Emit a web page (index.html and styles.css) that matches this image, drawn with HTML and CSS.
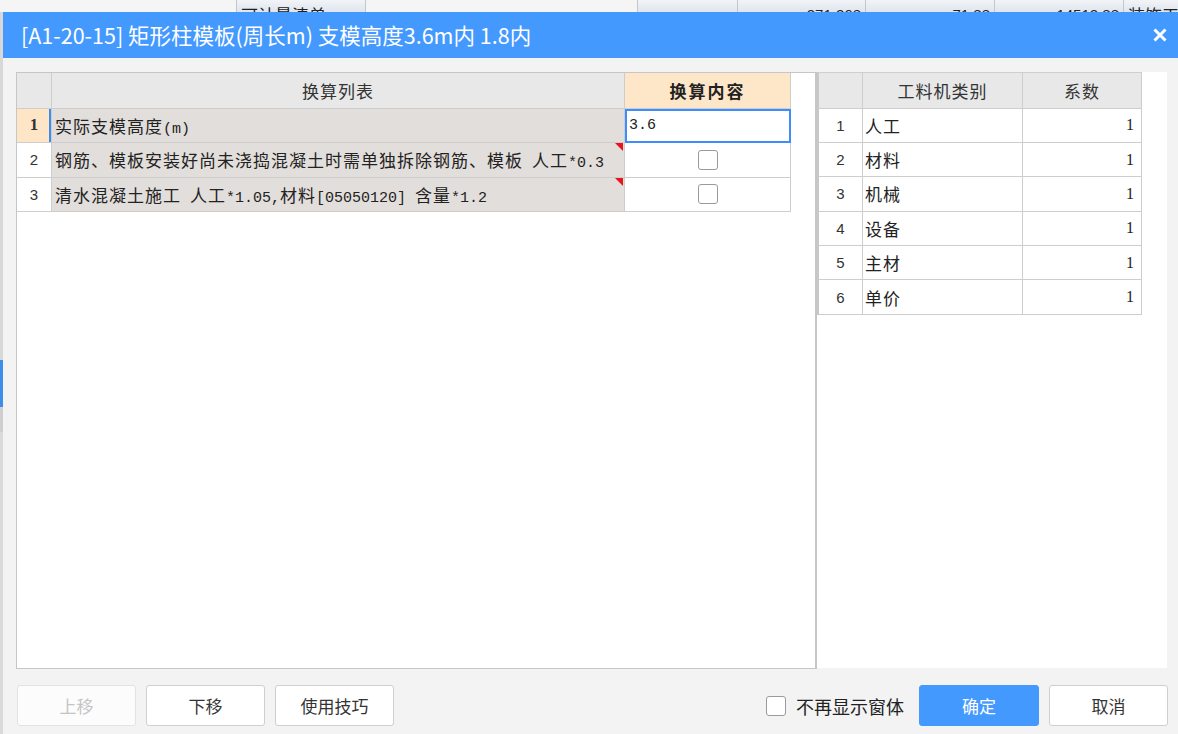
FILE: index.html
```html
<!DOCTYPE html>
<html lang="zh-CN">
<head>
<meta charset="utf-8">
<title>换算</title>
<link rel="stylesheet" href="styles.css">
</head>
<body>
<div class="bgwin">
  <div class="bgcell c1"></div>
  <div class="bgcell c2">可计量清单</div>
  <div class="bgcell c3"></div>
  <div class="bgcell c4"></div>
  <div class="bgcell c5 num">371.368</div>
  <div class="bgcell c6 num">71.88</div>
  <div class="bgcell c7 num">14512.88</div>
  <div class="bgcell c8">装饰工</div>
</div>
<div class="stage">
  <div class="leftstrip"></div>
  <div class="dialog">
    <div class="titlebar">
      <span class="title">[A1-20-15] 矩形柱模板(周长m) 支模高度3.6m内 1.8内</span>
      <svg class="close" width="14" height="14" viewBox="0 0 14 14"><path d="M1.5 1.5 L12.5 12.5 M12.5 1.5 L1.5 12.5" stroke="#fff" stroke-width="3" stroke-linecap="butt"/></svg>
    </div>
    <div class="body">
      <div class="main">
        <div class="lpanel">
          <div class="lgrid">
            <div class="cell head"></div>
            <div class="cell head">换算列表</div>
            <div class="cell head headhi">换算内容</div>

            <div class="cell rn rnsel">1</div>
            <div class="cell desc"><span class="txt">实际支模高度<span class="lat">(m)</span></span></div>
            <div class="cell val valsel"><span class="lat">3.6</span></div>

            <div class="cell rn">2</div>
            <div class="cell desc"><span class="txt">钢筋、模板安装好尚未浇捣混凝土时需单独拆除钢筋、模板<span class="lat"> </span>人工<span class="lat">*0.3</span></span><i class="flag"></i></div>
            <div class="cell chk"><span class="cb"></span></div>

            <div class="cell rn">3</div>
            <div class="cell desc"><span class="txt">清水混凝土施工<span class="lat"> </span>人工<span class="lat">*1.05,</span>材料<span class="lat">[05050120] </span>含量<span class="lat">*1.2</span></span><i class="flag"></i></div>
            <div class="cell chk"><span class="cb"></span></div>
          </div>
        </div>
        <div class="rpanel">
          <div class="rgrid">
            <div class="cell head"></div>
            <div class="cell head">工料机类别</div>
            <div class="cell head">系数</div>

            <div class="cell rn">1</div><div class="cell name">人工</div><div class="cell coef">1</div>
            <div class="cell rn">2</div><div class="cell name">材料</div><div class="cell coef">1</div>
            <div class="cell rn">3</div><div class="cell name">机械</div><div class="cell coef">1</div>
            <div class="cell rn">4</div><div class="cell name">设备</div><div class="cell coef">1</div>
            <div class="cell rn">5</div><div class="cell name">主材</div><div class="cell coef">1</div>
            <div class="cell rn">6</div><div class="cell name">单价</div><div class="cell coef">1</div>
          </div>
        </div>
      </div>
      <div class="footer">
        <div class="btngroup">
          <button class="btn disabled">上移</button>
          <button class="btn">下移</button>
          <button class="btn">使用技巧</button>
        </div>
        <div class="actions">
          <label class="dontshow"><span class="cb"></span><span>不再显示窗体</span></label>
          <button class="btn primary">确定</button>
          <button class="btn">取消</button>
        </div>
      </div>
    </div>
  </div>
</div>
</body>
</html>
```

FILE: styles.css
```css
* { box-sizing: border-box; }

html, body {
  margin: 0;
  padding: 0;
}

body {
  width: 1178px;
  height: 734px;
  overflow: hidden;
  background: #e6e6e6;
  font-family: "Noto Sans CJK SC", "Noto Sans", sans-serif;
  color: #222;
}

/* window behind the dialog */
.bgwin {
  display: flex;
  height: 12px;
  overflow: hidden;
  background: #eef0f3;
}
.bgcell {
  height: 12px;
  overflow: hidden;
  border-right: 1px solid #c3c7cc;
  padding: 5px 4px 0;
  font-size: 17px;
  line-height: 20px;
  color: #222;
  white-space: nowrap;
  background: linear-gradient(#f2f4f7, #dfe5ee);
}
.bgcell.num { text-align: right; font-family: "Liberation Sans", sans-serif; font-size: 15px; }
.c1 { width: 237px; background: #f5f5f5; }
.c2 { width: 129px; }
.c3 { width: 272px; background: #f5f5f5; }
.c4 { width: 100px; }
.c5 { width: 128px; }
.c6 { width: 129px; }
.c7 { width: 129px; }
.c8 { width: 54px; border-right: none; }

.stage {
  display: flex;
  height: 722px;
}
.leftstrip {
  width: 3px;
  flex: none;
  background: linear-gradient(to bottom, #d8d8d8 0 348px, #3d8ee8 348px 395px, #cfcfcf 395px 420px, #dadada 420px);
}

.dialog {
  width: 1175px;
  flex: none;
  display: flex;
  flex-direction: column;
  background: #f3f3f3;
}

.titlebar {
  height: 46px;
  flex: none;
  background: #4499ff;
  display: flex;
  align-items: center;
  justify-content: space-between;
  padding: 0 11px 0 18px;
}
.title {
  color: #fff;
  font-size: 21.5px;
  line-height: 26px;
  white-space: nowrap;
}
.close { display: block; }

.body {
  padding: 14px 11px 0 13px;
  display: flex;
  flex-direction: column;
}

.main {
  display: flex;
  height: 597px;
}

.lpanel {
  width: 801px;
  height: 597px;
  background: #fff;
  border: 1px solid #c6c6c6;
  border-right-width: 2px;
}
.rpanel {
  flex: 1;
  height: 596px;
  background: #fff;
}

.lgrid {
  display: grid;
  grid-template-columns: 35px 573px 166px;
  grid-template-rows: 35.5px repeat(3, 34.6px);
  width: 774px;
}
.rgrid {
  display: grid;
  grid-template-columns: 44px 160px 119px;
  grid-template-rows: 35.5px repeat(6, 34.4px);
  width: 325px;
  border-left: 2px solid #c8c8c8;
  border-top: 1px solid #cfcfcf;
}

.cell {
  position: relative;
  display: flex;
  align-items: center;
  border-right: 1px solid #cdcdcd;
  border-bottom: 1px solid #cdcdcd;
  font-size: 17px;
  letter-spacing: 1px;
  color: #222;
  white-space: nowrap;
  overflow: hidden;
}
.txt { white-space: pre; }
.lat {
  font-family: "Liberation Mono", monospace;
  font-size: 15px;
  letter-spacing: 0;
}

.head {
  background: #e8e8e8;
  justify-content: center;
  color: #333;
}
.headhi {
  background: #fee7c9;
  font-weight: 700;
  letter-spacing: 2px;
  color: #222;
}

.rn {
  justify-content: center;
  font-family: "Liberation Sans", sans-serif;
  font-size: 15px;
  letter-spacing: 0;
  background: #fff;
  color: #333;
}
.rnsel {
  background: #fde5c6;
  font-family: "Liberation Serif", serif;
  font-weight: 700;
  font-size: 17px;
  box-shadow: inset -2px 0 0 #3c8cf0;
}

.desc {
  background: #e2dedb;
  padding-left: 3px;
}
.flag {
  position: absolute;
  top: 0;
  right: 1px;
  width: 0;
  height: 0;
  border-top: 8px solid #e8141b;
  border-left: 8px solid transparent;
}

.val {
  background: #fff;
  padding-left: 3px;
}
.valsel {
  border: 2px solid #3d8dff;
  padding-left: 2px;
}

.chk {
  justify-content: center;
  background: #fff;
}
.cb {
  display: inline-block;
  width: 20px;
  height: 20px;
  border: 1px solid #9a9a9a;
  border-radius: 3px;
  background: #fff;
  flex: none;
}

.name {
  background: #fff;
  padding-left: 2px;
}
.coef {
  background: #fff;
  justify-content: flex-end;
  padding-right: 7px;
  font-family: "Liberation Serif", serif;
  font-size: 16px;
  letter-spacing: 0;
}

.footer {
  margin-top: 16px;
  margin-right: -1px;
  display: flex;
  justify-content: space-between;
  align-items: center;
  height: 41px;
}
.btngroup, .actions {
  display: flex;
  align-items: center;
  gap: 10px;
}
.btngroup { padding-left: 1px; }

.btn {
  width: 119px;
  height: 41px;
  border: 1px solid #cfcfcf;
  border-radius: 3px;
  background: #fff;
  font-family: "Noto Sans CJK SC", sans-serif;
  font-size: 17px;
  color: #333;
  padding: 0;
  margin: 0;
  cursor: pointer;
}
.btn.disabled {
  color: #c4c4c4;
  border-color: #e3e3e3;
  background: #fcfcfc;
}
.btn.primary {
  width: 120px;
  background: #4499ff;
  border-color: #4499ff;
  color: #fff;
}

.dontshow {
  display: flex;
  align-items: center;
  gap: 10px;
  margin-right: 5px;
  font-size: 18px;
  color: #222;
}
```
